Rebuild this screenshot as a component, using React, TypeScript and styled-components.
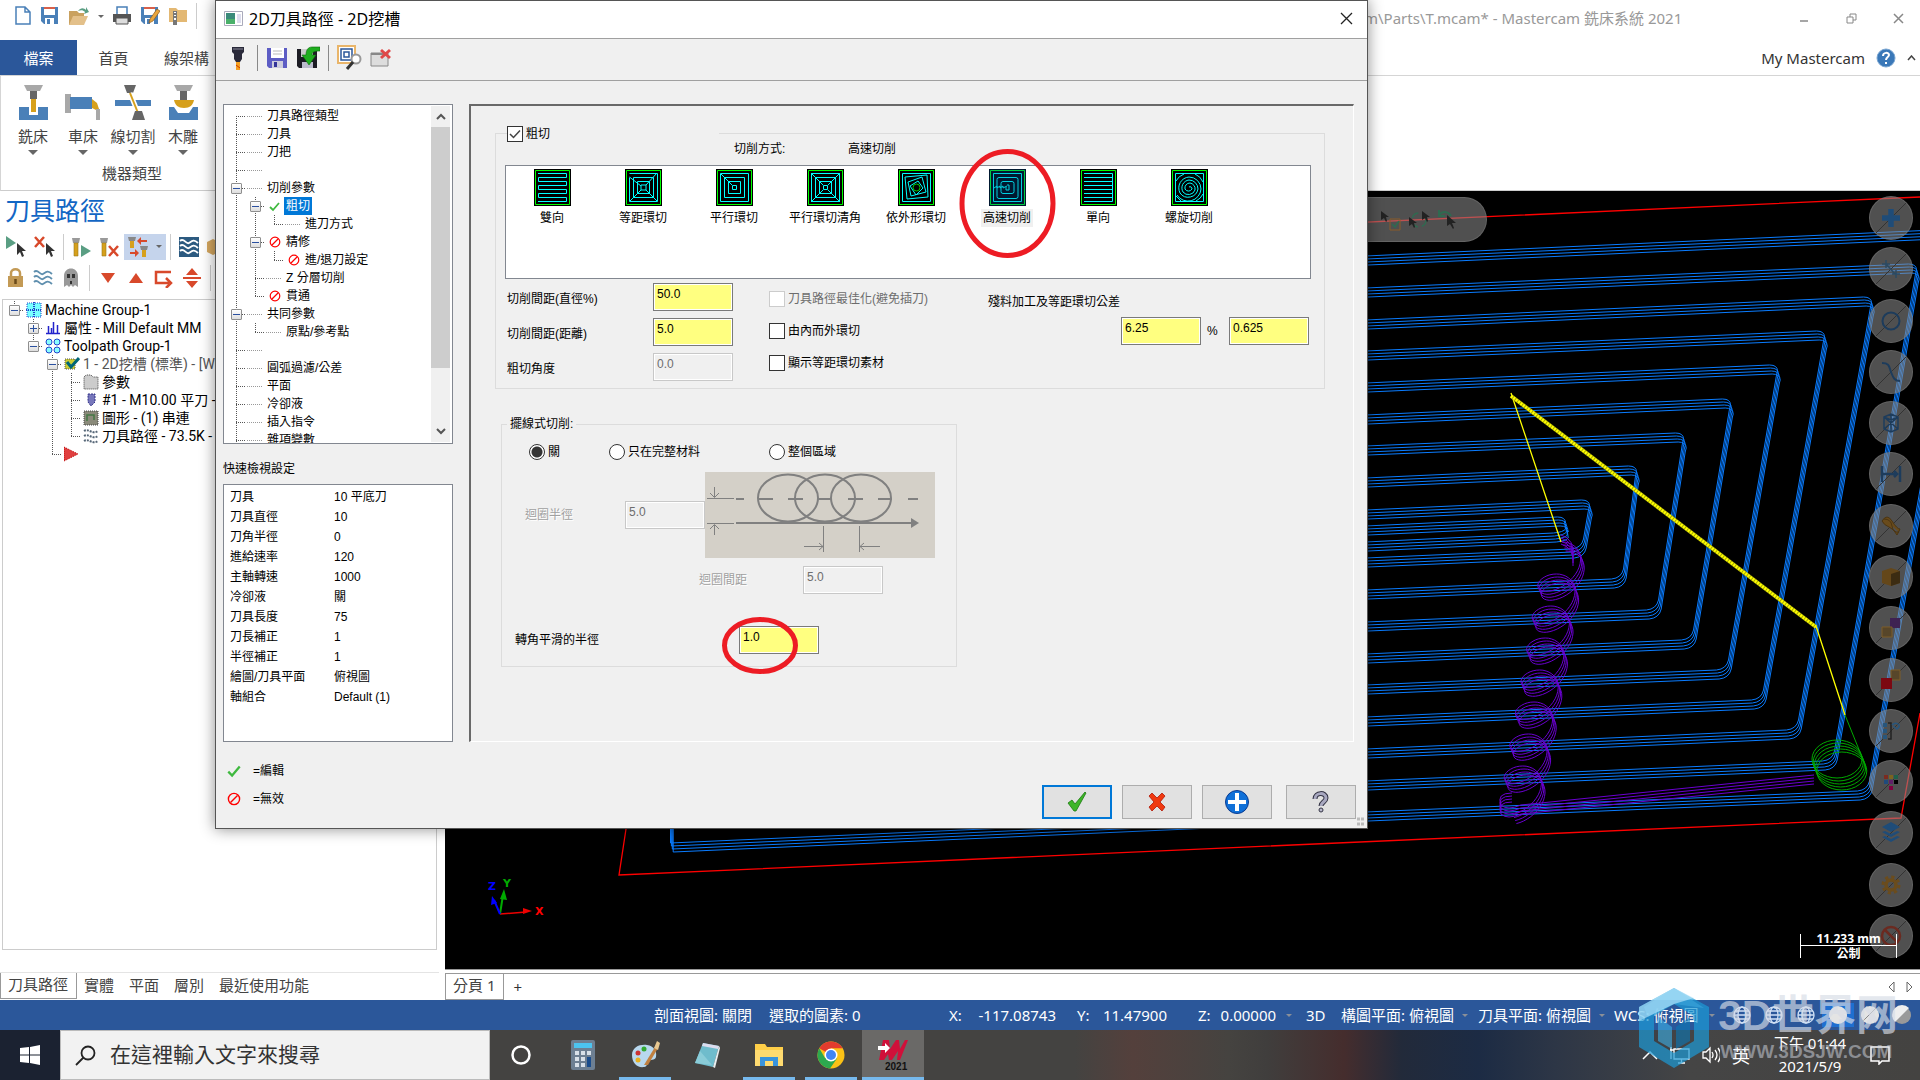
import React from "react";
import styled, { createGlobalStyle, css } from "styled-components";

const UI = `"Noto Sans", "Noto Sans CJK TC", sans-serif`;
const CLASSIC = `"Liberation Sans", "Noto Sans CJK TC", sans-serif`;

const Global = createGlobalStyle`
  * { box-sizing: border-box; }
  html, body { margin: 0; height: 100%; }
  body { font-family: ${UI}; font-size: 15px; color: #333; background: #fff; overflow: hidden; }
  button, input { font-family: inherit; font-size: inherit; color: inherit; margin: 0; }
  button { background: none; border: 0; padding: 0; }
  svg { display: block; flex: none; }
`;

/* ---------- shell ---------- */
const Shell = styled.div`
  min-height: 100vh;
  display: flex;
  flex-direction: column;
  position: relative;
`;
const Between = styled.div`
  display: flex;
  justify-content: space-between;
  align-items: center;
`;
const TitleBar = styled(Between)`
  height: 40px;
  padding: 0 16px 8px 14px;
`;
const QuickBar = styled.div`
  display: flex;
  align-items: center;
  gap: 8px;
`;
const IconButton = styled.button`
  display: flex;
  align-items: center;
  justify-content: center;
`;
const TitleText = styled.div`
  color: #999;
  width: 540px;
  display: flex;
  justify-content: space-between;
  align-items: center;
  line-height: 20px;
  padding-top: 4px;
`;
const WindowButtons = styled.div`
  display: flex;
  gap: 36px;
`;
const TabBar = styled(Between)`
  height: 36px;
  border-bottom: 1px solid #d5d5d5;
`;
const RibbonTabs = styled.div`
  display: flex;
  height: 35px;
`;
const RibbonTab = styled.button<{ $file?: boolean }>`
  width: ${(p) => (p.$file ? 77 : 73)}px;
  white-space: nowrap;
  line-height: 34px;
  color: ${(p) => (p.$file ? "#fff" : "#444")};
  background: ${(p) => (p.$file ? "#2b579a" : "transparent")};
`;
const Account = styled.div`
  display: flex;
  align-items: center;
  gap: 11px;
  padding-right: 4px;
`;
const Ribbon = styled.div`
  height: 115px;
  padding-left: 7px;
  border-left: 1px solid #d5d5d5;
  border-bottom: 1px solid #ccc;
`;
const MachineRow = styled.div`
  display: flex;
  padding-top: 8px;
`;
const MachineButton = styled.button`
  width: 50px;
  display: flex;
  flex-direction: column;
  align-items: center;
  gap: 1px;
  white-space: nowrap;
  line-height: 26px;
  color: #444;
`;
const RibbonCaption = styled.div`
  width: 248px;
  text-align: center;
  line-height: 36px;
  color: #444;
`;
const Workspace = styled.div`
  flex: 1;
  display: flex;
  min-height: 0;
`;
const Manager = styled.aside`
  width: 445px;
  display: flex;
  flex-direction: column;
`;
const ManagerTitle = styled.h2`
  margin: 0;
  padding: 0 5px 2px;
  font-weight: 400;
  font-size: 25px;
  line-height: 38px;
  color: #1266c4;
`;
const ToolRow = styled.div`
  display: flex;
  align-items: center;
  height: 31px;
  padding-left: 5px;
  gap: 8px;
`;
const Divider = styled.span<{ $c?: string; $h?: number }>`
  width: 1px;
  height: ${(p) => p.$h ?? 26}px;
  background: ${(p) => p.$c ?? "#ccc"};
`;
const ToggleTool = styled(IconButton)`
  width: 42px;
  height: 26px;
  gap: 8px;
  margin: 0 -4px;
  background: #c5d4ec;
`;
const OpsTree = styled.div`
  flex: 1;
  margin: 6px 8px 0 2px;
  padding: 1px 0 0 2px;
  border: 1px solid #ccc;
  font-family: Roboto, "Noto Sans CJK TC", sans-serif;
  font-size: 14px;
  color: #000;
  overflow: hidden;
`;
const PaneTabs = styled.div`
  height: 28px;
  margin-top: 22px;
  display: flex;
  border-top: 1px solid #e4e4e4;
  margin-right: 6px;
`;
const PaneTab = styled.button<{ $on?: boolean }>`
  padding: 0 8px 0 7px;
  height: 26px;
  line-height: 20px;
  padding-bottom: 3px;
  color: #444;
  border: solid #999;
  border-width: ${(p) => (p.$on ? "0 1px 1px 1px" : "0")};
`;
const ViewColumn = styled.main`
  flex: 1;
  min-width: 0;
  display: flex;
  flex-direction: column;
`;
const Viewport = styled.div`
  flex: 1;
  position: relative;
  overflow: hidden;
  background: #000;
`;
const Canvas = styled.svg`
  position: absolute;
  inset: 0;
`;
const SelectBar = styled.div`
  position: absolute;
  top: 6px;
  left: 700px;
  width: 342px;
  height: 45px;
  border-radius: 0 23px 23px 0;
  background: rgba(140, 140, 140, 0.57);
  border: 1px solid rgba(120, 120, 120, 0.5);
  display: flex;
  justify-content: flex-end;
  align-items: center;
  gap: 6px;
  padding-right: 28px;
`;
const MaskRail = styled.div`
  position: absolute;
  top: 5px;
  bottom: 11px;
  right: 7px;
  display: flex;
  flex-direction: column;
  justify-content: space-between;
`;
const MaskButton = styled.button`
  width: 44px;
  height: 44px;
  border-radius: 50%;
  background: rgba(140, 140, 140, 0.57);
  border: 1px solid rgba(120, 120, 120, 0.5);
  display: flex;
  align-items: center;
  justify-content: center;
`;
const ScaleBar = styled.div`
  position: absolute;
  right: 23px;
  bottom: 11px;
  width: 97px;
  height: 24px;
  border: solid #fff;
  border-width: 0 1px;
  color: #fff;
  font-weight: 700;
  font-size: 12px;
  line-height: 16px;
  text-align: center;
  font-family: "Noto Sans", "Noto Sans CJK TC", sans-serif;
`;
const ScaleTop = styled.div`
  height: 12px;
  line-height: 10px;
  border-bottom: 1px solid #fff;
`;
const SheetTabs = styled.div`
  height: 31px;
  border-top: 1px solid #999;
  padding-top: 3px;
`;
const SheetInner = styled(Between)`
  height: 26px;
  border-top: 1px solid #999;
  padding-right: 6px;
`;
const SheetGroup = styled.div`
  display: flex;
  gap: 9px;
`;

/* ---------- status + taskbar ---------- */
const StatusBar = styled.footer`
  height: 30px;
  background: #2b579a;
  color: #fff;
  display: flex;
  align-items: center;
  justify-content: flex-end;
  padding-right: 2px;
  line-height: 28px;
  white-space: nowrap;
`;
const StatusItem = styled.span<{ $w: number }>`
  width: ${(p) => p.$w}px;
  display: flex;
  align-items: center;
  justify-content: space-between;
`;
const ShadeButton = styled(IconButton)<{ $on?: boolean }>`
  width: 32px;
  height: 24px;
  background: ${(p) => (p.$on ? "#1f6fd0" : "transparent")};
`;
const Taskbar = styled.div`
  height: 50px;
  display: flex;
  color: #fff;
  background: linear-gradient(90deg, #444341 0 50%, #444341 56%, #54403c 59%, #454340 64%, #403e3d 66%, #452d2d 70%, #222a3a 73%, #1c2b44 77%, #2d3646 81%, #454545 88%, #444341);
`;
const StartButton = styled(IconButton)`
  width: 60px;
  background: #1b2231;
`;
const SearchBox = styled.label`
  width: 430px;
  display: flex;
  align-items: center;
  gap: 14px;
  padding-left: 14px;
  background: #f2f2f2;
  border: 1px solid #bbb;
`;
const SearchInput = styled.input`
  flex: 1;
  border: 0;
  outline: 0;
  background: transparent;
  font-size: 21px;
  height: 46px;
  padding: 0 0 2px;
  &::placeholder { color: #333; opacity: 1; }
`;
const TaskButton = styled(IconButton)<{ $run?: boolean; $on?: boolean }>`
  width: 62px;
  padding-top: 3px;
  border-bottom: 3px solid transparent;
  ${(p) => p.$run && css`background: linear-gradient(#76b9ed, #76b9ed) center bottom / 52px 3px no-repeat border-box;`}
  ${(p) => p.$on && css`background: #6a6967; border-bottom-color: #76b9ed;`}
`;
const Tray = styled.div`
  margin-left: auto;
  display: flex;
  align-items: center;
  gap: 12px;
  padding-right: 30px;
`;
const Ime = styled.span`
  font-size: 18px;
`;
const Clock = styled.div`
  text-align: center;
  line-height: 23px;
  width: 96px;
`;
const Watermark = styled.div`
  position: absolute;
  right: 22px;
  bottom: 11px;
  display: flex;
  gap: 8px;
  align-items: center;
  color: rgba(215, 220, 230, 0.66);
  pointer-events: none;
`;
const MarkName = styled.div`
  font: 700 42px/48px "Liberation Sans", "Noto Sans CJK SC", sans-serif;
  white-space: nowrap;
`;
const MarkUrl = styled.div`
  font: 700 19px/24px "Liberation Sans", sans-serif;
  padding-left: 2px;
  opacity: 0.75;
`;

/* ---------- tree ---------- */
const TreeLine = styled.div`
  height: 18px;
  display: flex;
  align-items: center;
  white-space: nowrap;
`;
type GuideKind = "none" | "bar" | "tee" | "elbow" | "first" | "node" | "nodeEnd";
const Guide = styled.span<{ $k: GuideKind }>`
  width: 19px;
  height: 18px;
  flex: none;
  padding-left: 9px;
  display: flex;
  background-repeat: no-repeat;
  ${(p) => {
    const v = "repeating-linear-gradient(#555 0 1px, transparent 1px 2px)";
    const h = "repeating-linear-gradient(90deg, #555 0 1px, transparent 1px 2px)";
    const full = `${v} 9px 0 / 1px 18px no-repeat`;
    const half = `${v} 9px 0 / 1px 9px no-repeat`;
    const low = `${v} 9px 9px / 1px 9px no-repeat`;
    const arm = `${h} 9px 9px / 10px 1px no-repeat`;
    if (p.$k === "bar") return `background: ${full};`;
    if (p.$k === "tee" || p.$k === "node") return `background: ${full}, ${arm};`;
    if (p.$k === "elbow" || p.$k === "nodeEnd") return `background: ${half}, ${arm};`;
    if (p.$k === "first") return `background: ${low}, ${arm};`;
    return "";
  }}
`;
const Expander = styled.button`
  width: 11px;
  height: 11px;
  margin: 4px 0 0 -5px;
  flex: none;
  border: 1px solid #8f8f8f;
  border-radius: 1px;
  background: linear-gradient(#fff, #ddd);
  display: flex;
  align-items: center;
  justify-content: center;
`;
const Slot = styled.span<{ $dots?: boolean }>`
  width: 19px;
  height: 18px;
  flex: none;
  display: flex;
  align-items: center;
  justify-content: center;
  ${(p) => p.$dots && css`background: repeating-linear-gradient(90deg, #999 0 1px, transparent 1px 2px) 1px 9px / 16px 1px no-repeat;`}
`;
const NodeText = styled.span<{ $on?: boolean; $soft?: boolean }>`
  padding: 0 2px;
  line-height: 18px;
  color: ${(p) => (p.$on ? "#fff" : p.$soft ? "#555" : "#000")};
  background: ${(p) => (p.$on ? "#0078d7" : "transparent")};
`;

/* ---------- dialog ---------- */
const Dialog = styled.section`
  position: absolute;
  left: 215px;
  top: 0;
  width: 1153px;
  height: 829px;
  background: #f0f0f0;
  border: 1px solid #555;
  box-shadow: 0 0 14px rgba(0, 0, 0, 0.45);
  font-family: ${CLASSIC};
  font-size: 12px;
  color: #000;
  display: flex;
  flex-direction: column;
`;
const DialogTitle = styled(Between)`
  height: 37px;
  padding: 0 14px 2px 8px;
  background: #fff;
  font-family: ${UI};
  font-size: 16px;
  line-height: 34px;
`;
const DialogName = styled.div`
  display: flex;
  align-items: center;
  gap: 6px;
`;
const DialogTools = styled.div`
  height: 43px;
  border-top: 1px solid #a0a0a0;
  border-bottom: 1px solid #a0a0a0;
  display: flex;
  align-items: center;
  padding: 0 0 4px 11px;
  gap: 8px;
`;
const DialogBody = styled.div`
  display: flex;
  gap: 16px;
  padding: 23px 13px 0 7px;
`;
const SideColumn = styled.div`
  width: 230px;
`;
const TreeBox = styled.div`
  height: 340px;
  border: 1px solid #828790;
  background: #fff;
  display: flex;
  justify-content: space-between;
  overflow: hidden;
`;
const TreeRows = styled.div`
  padding: 2px 0 0 3px;
`;
const ScrollTrack = styled.div`
  width: 19px;
  margin: 1px 2px 1px 0;
  background: #f0f0f0;
  display: flex;
  flex-direction: column;
  justify-content: space-between;
`;
const ScrollButton = styled(IconButton)`
  height: 21px;
  width: 19px;
`;
const ScrollThumb = styled.div`
  height: 241px;
  margin-bottom: 53px;
  background: #cdcdcd;
`;
const SideLabel = styled.div`
  height: 40px;
  padding-top: 15px;
  line-height: 20px;
`;
const InfoBox = styled.div`
  height: 258px;
  padding: 2px 6px;
  border: 1px solid #828790;
  background: #fff;
`;
const InfoTable = styled.table`
  border-collapse: collapse;
  td, th { padding: 0; height: 20px; line-height: 20px; font-weight: 400; text-align: left; }
  th { width: 104px; }
`;
const Pane = styled.div`
  flex: 1;
  height: 638px;
  padding: 27px 28px 0 24px;
  border: solid;
  border-width: 2px 1px 1px 2px;
  border-color: #696969 #fff #fff #696969;
`;
const Group = styled.fieldset<{ $narrow?: boolean }>`
  margin: 0;
  min-width: 0;
  padding: 0;
  border: 1px solid #dcdcdc;
  height: ${(p) => (p.$narrow ? 251 : 256)}px;
  ${(p) => p.$narrow && css`width: 456px; margin: 27px 0 0 6px;`}
`;
const RoughHead = styled.div`
  display: flex;
  height: 34px;
  margin-top: -8px;
`;
const RoughToggle = styled.div`
  width: 212px;
  height: 16px;
  margin-left: 11px;
  background: #f0f0f0;
`;
const MethodName = styled.div`
  display: flex;
  gap: 48px;
  margin-left: 15px;
  padding-top: 14px;
  line-height: 18px;
`;
const MethodList = styled.div`
  height: 114px;
  margin: 5px 13px 4px 9px;
  border: 1px solid #828790;
  background: #fff;
  display: flex;
`;
const Method = styled.button<{ $on?: boolean }>`
  width: 91px;
  height: 60px;
  padding: 3px 0 0 1px;
  display: flex;
  flex-direction: column;
  align-items: center;
  gap: 3px;
  white-space: nowrap;
  span { line-height: 18px; padding: 0 2px; background: ${(p) => (p.$on ? "#f0f0f0" : "transparent")}; }
`;
const Settings = styled.div`
  display: flex;
  padding-left: 11px;
`;
const FieldStack = styled.div`
  display: grid;
  grid-template-columns: 146px 80px;
  align-items: center;
  row-gap: 7px;
`;
const TextField = styled.input`
  width: 80px;
  height: 28px;
  padding: 0 2px 6px 3px;
  border: 1px solid #7a7a7a;
  outline: 0;
  background: #ffff80;
  box-shadow: inset 0 0 0 1px #fff;
  font-size: 12px;
  border-radius: 0;
  &:disabled { background: #f0f0f0; border-color: #c8c8c8; color: #6d6d6d; }
`;
const CheckStack = styled.div`
  width: 219px;
  margin-left: 36px;
  padding-top: 8px;
  display: flex;
  flex-direction: column;
  gap: 16px;
`;
const Choice = styled.label<{ $off?: boolean }>`
  display: inline-flex;
  align-items: center;
  gap: 3px;
  height: 16px;
  line-height: 16px;
  white-space: nowrap;
  color: ${(p) => (p.$off ? "#6d6d6d" : "#000")};
`;
const Tick = styled.input`
  appearance: none;
  width: 16px;
  height: 16px;
  border: 1px solid #333;
  background: #fff;
  &[type="radio"] { border-radius: 50%; }
  &[type="radio"]:checked { background: radial-gradient(#333 0 5px, #fff 6px); }
  &[type="checkbox"]:checked {
    background: #fff url('data:image/svg+xml;utf8,<svg xmlns="http://www.w3.org/2000/svg" viewBox="0 0 14 14"><path d="M2 7l3.500 3.500L12 3.500" fill="none" stroke="%23444" stroke-width="1.500"/></svg>');
  }
  &:disabled { border-color: #ccc; }
`;
const Tolerance = styled.div`
  padding-top: 10px;
  line-height: 18px;
`;
const ToleranceRow = styled.div`
  display: flex;
  align-items: center;
  gap: 6px;
  padding: 6px 0 0 133px;
  label { width: 16px; }
`;
const Legend = styled.legend`
  margin-left: 5px;
  padding: 0 3px;
  line-height: 16px;
  height: 16px;
`;
const RadioRow = styled.div`
  display: grid;
  grid-template-columns: 80px 160px 100px;
  padding: 12px 0 12px 27px;
`;
const LoopRow = styled.div`
  display: flex;
  align-items: center;
  padding-left: 23px;
`;
const Caption = styled.label<{ $w: number; $off?: boolean }>`
  width: ${(p) => p.$w}px;
  line-height: 18px;
  ${(p) => p.$off && css`color: #a0a0a0; text-shadow: 1px 1px #fff;`}
`;
const SpacingRow = styled.div`
  display: flex;
  align-items: center;
  padding: 8px 0 0 197px;
`;
const CornerRow = styled.div`
  display: flex;
  align-items: center;
  padding: 32px 0 0 13px;
`;
const DialogFoot = styled.div`
  display: flex;
  justify-content: space-between;
  padding: 14px 11px 0 11px;
`;
const LegendKey = styled.div`
  display: flex;
  flex-direction: column;
  gap: 10px;
  padding-top: 6px;
`;
const KeyRow = styled.div`
  display: flex;
  align-items: center;
  gap: 12px;
  line-height: 18px;
`;
const Actions = styled.div`
  display: flex;
  gap: 10px;
  padding-top: 29px;
`;
const Action = styled(IconButton)<{ $main?: boolean; $last?: boolean }>`
  width: 70px;
  height: 34px;
  background: #e1e1e1;
  border: ${(p) => (p.$main ? "2px solid #0078d7" : "1px solid #adadad")};
  margin-left: ${(p) => (p.$last ? 4 : 0)}px;
`;
const Ring = styled.svg`
  position: absolute;
  left: 0;
  top: 0;
  pointer-events: none;
`;

/* ---------- drawings ---------- */
const S: React.FC<{ w: number; h?: number; v?: string; children: React.ReactNode }> = ({ w, h, v, children }) => (
  <svg width={w} height={h ?? w} viewBox={v ?? `0 0 ${w} ${h ?? w}`} fill="none" aria-hidden="true">{children}</svg>
);
const Down = ({ c = "#666", w = 10 }: { c?: string; w?: number }) => (
  <S w={w} h={w / 2} v="0 0 10 5"><path d="M0 0h10L5 5z" fill={c} /></S>
);
const Disk = ({ c = "#4a80b8", pen = false }: { c?: string; pen?: boolean }) => (
  <S w={20}>
    <path d="M1 1h17v17H4l-3-3z" fill={c} /><path d="M4 1h11v8H4z" fill="#fff" /><path d="M4 1h11v2H4z" fill="#d8604a" />
    <path d="M5 12h9v6H5z" fill="#fff" /><path d="M7 13h3v5H7z" fill={c} />
    {pen && <path d="M9 17l1-4L17 3l3 2-7 10z" fill="#e9a53c" stroke="#8a5a20" strokeWidth=".7" />}
  </S>
);
const NewFile = () => <S w={18} h={20}><path d="M2 1h9l5 5v12H2zM11 1v5h5" stroke="#4a80b8" strokeWidth="1.500" /></S>;
const OpenFile = () => (
  <S w={22} h={20}><path d="M1 5h8l2 2h5v12H1z" fill="#c9a15f" /><path d="M5 10h15l-4 9H1z" fill="#e3c08a" /><path d="M10 5c3-4 6-3 8-1V1l3 5-5 2 1-2c-2-2-4-2-7-1z" fill="#5a9e83" /></S>
);
const Printer = () => (
  <S w={20}><path d="M5 1h10v8H5z" fill="#fff" stroke="#4a80b8" strokeWidth="1.500" /><path d="M1 8h18v8H1z" fill="#555" /><path d="M4 12h12v6H4z" fill="#ddd" stroke="#555" /></S>
);
const ZipFolder = () => (
  <S w={20}><path d="M1 2h7l2 2h9v12H1z" fill="#e3b873" /><path d="M5 5h4v14H5z" fill="#777" /><path d="M6 6h2v1H6zM6 9h2v1H6zM6 12h2v2H6z" fill="#fff" /></S>
);
const MachineIcon = ({ kind }: { kind: number }) => (
  <S w={36} h={38}>
    {kind === 0 && <><path d="M9 1h19l-3 6H12z" fill="#a8a8a8" /><path d="M15 7h7v8h-7z" fill="#666" /><path d="M4 23h10v8h9v-8h10v13H4z" fill="#4a80b8" /><path d="M16 15h5v13h-5z" fill="#d6a01c" /></>}
    {kind === 1 && <><path d="M0 10h6v19H0z" fill="#a8a8a8" /><path d="M5 13h22v12H5z" fill="#4a80b8" /><path d="M27 15l5 4 3 9-8-4z" fill="#d6a01c" /><path d="M31 25h4v11h-4z" fill="#a8a8a8" /></>}
    {kind === 2 && <><path d="M9 1h12l-3 8h-6z" fill="#666" /><path d="M0 16h36v6H0z" fill="#4a80b8" /><path d="M15 9l8 20" stroke="#fff" strokeWidth="5" /><path d="M15 9l8 20" stroke="#d6a01c" strokeWidth="2" /><path d="M20 27h7l3 9H17z" fill="#666" /></>}
    {kind === 3 && <><path d="M9 1h19l-3 6H12z" fill="#a8a8a8" /><path d="M15 7h7v9h-7z" fill="#666" /><path d="M4 23h5l4 6h11l4-6h5v13H4z" fill="#4a80b8" /><path d="M9 16h20c-1 5-4 8-10 8s-9-3-10-8z" fill="#d6a01c" /></>}
  </S>
);
const Cursor = ({ x = 10, y = 7, c = "#333" }) => <path d={`M${x} ${y}l0 12 3-3 2 5 2-1-2-5h4z`} fill={c} />;
const ToolBit = ({ x = 2 }) => <><path d={`M${x} 1h8l-1 5h-6z`} fill="#999" /><path d={`M${x + 2} 6h4v13h-4z`} fill="#d6a01c" stroke="#9a7a1c" strokeWidth=".6" /></>;
const Waves = ({ fill, c }: { fill?: string; c: string }) => (
  <S w={20}>{fill && <path d="M0 0h20v20H0z" fill={fill} />}{[4, 9, 14].map((y) => <path key={y} d={`M1 ${y}c4-4 6 4 9 2s5-4 9 0`} stroke={c} strokeWidth="1.800" />)}</S>
);
const Check = ({ c = "#3fb93f", w = 11 }) => <S w={w} v="0 0 11 11"><path d="M1 6l3 3 6-7" stroke={c} strokeWidth="1.800" /></S>;
const No = ({ w = 12 }) => <S w={w} v="0 0 12 12"><circle cx="6" cy="6" r="4.800" stroke="#f00" strokeWidth="1.200" /><path d="M3 9l6-6" stroke="#f00" strokeWidth="1.200" /></S>;

const patterns: React.ReactNode[] = [
  <path d="M4 4.500H32.500V8.500H4.500V12.500H32.500V16.500H4.500V20.500H32.500V24.500H4.500V28.500H32.500V32.500H4" />,
  <path d="M4.500 4.500H32.500V32.500H4.500V8.500M8.500 8.500h20v20h-20zM12.500 12.500h12v12h-12zM16 16h5v5h-5zM4.500 8L16 17M32 4L21 16M32 32L21 21M5 32L16 21" />,
  <path d="M4.500 4.500h28v28h-28zM8.500 8.500h20v20h-20zM12.500 12.500h12v12h-12zM16.500 16.500h4v4h-4zM5 5l11 11" />,
  <path d="M4.500 4.500h28v28h-28zM8.500 8.500h20v20h-20zM12.500 12.500h12v12h-12zM16.500 16.500h4v4h-4zM4 4l12 12M33 4L21 16M33 33L21 21M4 33l12-12" />,
  <><path d="M4.500 4.500h28v28h-28zM7 8l22-2 1 22-21 2zM10 13l14-5 4 15-15 4zM12 17l8-5 5 7-7 7z" /><circle cx="18.500" cy="18.500" r="3.500" stroke="#0c0" /></>,
  <path d="M4.500 4.500h28v28h-28zM10 8.500h17q2 0 2 2v17q0 2-2 2h-17q-2 0-2-2v-17q0-2 2-2zM14 12.500h9q2 0 2 2v8q0 2-2 2h-9q-2 0-2-2v-8q0-2 2-2zM5 19l3-2v2l3-2v2l3-2v2l4-2M18 16h2v5h-3v-3" />,
  <path d="M4 4.500H32.500V32.500H4M4 8.500H32M4 12.500H32M4 16.500H32M4 20.500H32M4 24.500H32M4 28.500H32" />,
  <><path d="M4.500 4.500h28v28h-28z" /><path d="M18 18a2 2 0 0 1 3 2a4 4 0 0 1-7 0a5 5 0 0 1 5-6a6 6 0 0 1 5 7a7 7 0 0 1-12 2a8 8 0 0 1 6-12a9 9 0 0 1 9 9a10 10 0 0 1-18 4a11 11 0 0 1 9-16a12 12 0 0 1 12 12a13 13 0 0 1-24 6M5 12a15 15 0 0 1 8-7M24 5a15 15 0 0 1 8 8M32 25a15 15 0 0 1-7 7M10 32l-5-5" /></>,
];
const PatternIcon = ({ i, on }: { i: number; on?: boolean }) => (
  <S w={37}>
    <path d="M0 0h37v37H0z" fill={on ? "#001830" : "#000"} />
    <path d="M1.500 1.500h34v34h-34z" stroke={on ? "#00d040" : "#0f0"} />
    <g stroke={on ? "#00d0e0" : "#0ff"}>{patterns[i]}</g>
  </S>
);

/* pocket rings: [left y at x=1367, top corner x/y, bottom corner x/y, left y of the bottom run] */
const rings = [
  [261, 1966, 234, 1869, 796, 817], [293, 1918, 269, 1834, 766, 786], [325, 1873, 302, 1798, 735, 754],
  [356, 1826, 336, 1763, 705, 722], [388, 1779, 370, 1728, 675, 690], [420, 1732, 404, 1693, 645, 659],
  [451, 1685, 438, 1658, 615, 627], [483, 1638, 471, 1623, 584, 595], [515, 1591, 505, 1583, 554, 563],
  [531, 1567, 522, 1565, 538, 547],
];
const steps = [-5, -2, 1, 4];
const ringPath = (r: number[], i: number) => {
  const [ly, tx, ty, bx, by, lb] = r;
  const start = i === 0 ? "L672 848V700" : `L1300 ${lb + 3}`;
  const big = i < 9 ? 10 : 4;
  return `M1300 ${ly + 3}L1367 ${ly}L${tx - 8} ${ty}Q${tx} ${ty} ${tx} ${ty + 6}L${tx - 1} ${ty + big}L${bx + 2} ${by - big}Q${bx} ${by - 1} ${bx - 10} ${by}L1367 ${lb}${start}`;
};
const coil = (() => {
  let d = "";
  for (let k = 0; k <= 272; k++) {
    const t = k / 36;
    const a = t * Math.PI * 2 - Math.PI / 2;
    const x = 1564 - t * 5.6 + 20 * Math.cos(a);
    const y = 562 + t * 32 + 15 * Math.sin(a) - 5 * Math.cos(a);
    d += `${k ? "L" : "M"}${x.toFixed(1)} ${y.toFixed(1)}`;
  }
  return d;
})();

const Scene = () => (
  <Canvas width="1475" height="778" viewBox="445 191 1475 778" fill="none">
    <path d="M445 264L1920 197M1920 713L1901 818L1360 842L619 875L626 829" stroke="#f00" strokeWidth="1.300" />
    <g stroke="#0a7cff" strokeWidth="1">
      {rings.map((r, i) => steps.map((s) => <path key={`${i}${s}`} d={ringPath(r, i)} transform={`translate(${s * 0.3} ${s})`} />))}
    </g>
    <g stroke="#6a00d0" strokeWidth="1">
      {steps.map((s) => <path key={s} d={coil} transform={`translate(${s * 0.4} ${s})`} />)}
      {steps.map((s) => <path key={`t${s}`} d={`M1561 ${540 + s}q14 4 12 22`} />)}
      {[-5, -2, 1, 4].map((s) => <path key={s} d={`M1512 ${798 + s}q-16 0-11 12q6 6 20 0L1814 ${780 + s}`} />)}
    </g>
    <path d="M1511 393L1561 542M1816 626L1845 715" stroke="#ff0" strokeWidth="1.300" />
    <path d="M1511 396L1816 627" stroke="#a8a800" strokeWidth="4" />
    <path d="M1511 396L1816 627" stroke="#ff0" strokeWidth="3" strokeDasharray="2 1" />
    <g stroke="#0a0">
      <path d="M1845 715L1864 762" />
      {[-5, -2, 1, 4, 7].map((s) => <ellipse key={s} cx={1839 + s * 0.4} cy={764 + s} rx="25" ry="19" />)}
    </g>
    <path d="M500 914L526 912" stroke="#e00" strokeWidth="1.500" /><path d="M532 911l-9-3v6z" fill="#e00" />
    <path d="M500 914L503 895" stroke="#0a0" strokeWidth="2" /><path d="M504 889l-4 10 7 1z" fill="#0a0" />
    <path d="M500 914L494 900" stroke="#00f" strokeWidth="2" /><path d="M492 896l-1 9 6-2z" fill="#00f" />
    <g fontFamily="DejaVu Sans, sans-serif" fontWeight="700" fontSize="11">
      <text x="535" y="915" fill="#f00">X</text><text x="503" y="887" fill="#0a0">Y</text><text x="488" y="890" fill="#00f">Z</text>
    </g>
  </Canvas>
);

const maskArt: React.ReactNode[] = [
  <path d="M12 3v18M3 12h18" stroke="#1f4c78" strokeWidth="5.500" />,
  <path d="M3 7h8M7 3v8M13 17h8M17 13v8M8 8l8 9" stroke="#2b4a62" strokeWidth="1.500" />,
  <circle cx="12" cy="12" r="8.500" stroke="#1d3c5c" strokeWidth="2" />,
  <path d="M3 3c8 0 7 4 9 9s3 9 9 9" stroke="#1d3c5c" strokeWidth="2" />,
  <path d="M5 6l7-3 7 3v12l-7 3-7-3zM5 6l14 12M5 18L19 6M12 3v18M5 6l7 3 7-3" stroke="#1d3c5c" strokeWidth="1.500" />,
  <path d="M3 4v16M21 4v16M4 12h14M15 9l3 3-3 3" stroke="#1d3c5c" strokeWidth="2.500" />,
  <path d="M3 7q5-8 10 0t8 8l-3 6q-3-6-8-8t-7-6zM5 5q7 0 8 7t7 6" fill="#694b1c" stroke="#4b3512" />,
  <><path d="M3 6l9-3 9 3v12l-9 3-9-3z" fill="#64471a" /><path d="M12 9l9-3v12l-9 3z" fill="#3c2c12" /></>,
  <><path d="M11 2h10v10H11z" fill="#3e2252" /><path d="M3 11h10v10H3z" fill="#57462a" stroke="#7c5d28" /></>,
  <><path d="M12 2h9v10h-9z" fill="#57462a" stroke="#7c5d28" /><path d="M2 10h11v11H2z" fill="#7c0812" /></>,
  <><path d="M4 4h4v4H4zM4 10h4v4H4zM4 16h4v4H4z" fill="#28567c" /><path d="M9 4h3v16H9" stroke="#222" strokeWidth="1.500" /><path d="M13 6q3-3 6-1t-1 5l-4-3" stroke="#28567c" strokeWidth="1.500" /></>,
  <><path d="M5 5h4v4H5z" fill="#7c2b20" /><path d="M10 5h4v4h-4z" fill="#7c6420" /><path d="M15 5h4v4h-4z" fill="#20604a" /><path d="M5 10h4v4H5z" fill="#204a7c" /><path d="M10 10h4v4h-4z" fill="#602068" /><path d="M15 10h4v4h-4z" fill="#000" /><path d="M10 16h4v4h-4z" fill="#800040" /></>,
  <path d="M12 1l9 5-9 5-9-5zM3 11l3-1 6 3 6-3 3 1-9 5zM3 16l3-1 6 3 6-3 3 1-9 5z" fill="#1f4c78" />,
  <><circle cx="12" cy="12" r="5" stroke="#6b4c1c" strokeWidth="3.500" /><circle cx="12" cy="12" r="8" stroke="#6b4c1c" strokeWidth="3" strokeDasharray="3.200 3.083" /></>,
  <><circle cx="12" cy="12" r="9" stroke="#6b2a20" strokeWidth="2.500" /><path d="M6 6l12 12" stroke="#6b2a20" strokeWidth="2.500" /></>,
];

/* ---------- data ---------- */
type Node = { g: GuideKind[]; icon?: React.ReactNode; text?: string; plus?: boolean; on?: boolean; soft?: boolean; dots?: boolean };
const NodeRow = ({ n }: { n: Node }) => (
  <TreeLine>
    {n.g.map((k, i) => (
      <Guide key={i} $k={k}>
        {(k === "node" || k === "nodeEnd") && (
          <Expander aria-label="toggle">
            <S w={7}><path d={n.plus ? "M0 3.500h7M3.500 0v7" : "M0 3.500h7"} stroke="#2a50a0" /></S>
          </Expander>
        )}
      </Guide>
    ))}
    <Slot $dots={n.dots}>{n.icon}</Slot>
    {n.text && <NodeText $on={n.on} $soft={n.soft}>{n.text}</NodeText>}
  </TreeLine>
);
const pageTree: Node[] = [
  { g: ["first"], dots: true, text: "刀具路徑類型" },
  { g: ["tee"], dots: true, text: "刀具" },
  { g: ["tee"], dots: true, text: "刀把" },
  { g: ["tee"], dots: true },
  { g: ["node"], dots: true, text: "切削參數" },
  { g: ["bar", "node"], icon: <Check />, text: "粗切", on: true },
  { g: ["bar", "bar", "elbow"], dots: true, text: "進刀方式" },
  { g: ["bar", "node"], icon: <No />, text: "精修" },
  { g: ["bar", "bar", "elbow"], icon: <No />, text: "進/退刀設定" },
  { g: ["bar", "tee"], dots: true, text: "Z 分層切削" },
  { g: ["bar", "elbow"], icon: <No />, text: "貫通" },
  { g: ["node"], dots: true, text: "共同參數" },
  { g: ["bar", "elbow"], dots: true, text: "原點/參考點" },
  { g: ["tee"], dots: true },
  { g: ["tee"], dots: true, text: "圓弧過濾/公差" },
  { g: ["tee"], dots: true, text: "平面" },
  { g: ["tee"], dots: true, text: "冷卻液" },
  { g: ["tee"], dots: true, text: "插入指令" },
  { g: ["tee"], dots: true, text: "雜項變數" },
];
const opsTree: Node[] = [
  { g: ["nodeEnd"], icon: <S w={16}><path d="M1 1h14v14H1z" fill="#7ff" stroke="#24c" strokeDasharray="1 1" /><path d="M8 0v16M0 8h16" stroke="#24c" strokeWidth="2" strokeDasharray="1 1" /></S>, text: "Machine Group-1" },
  { g: ["none", "node"], plus: true, icon: <S w={16}><path d="M1 13.500h14M3.500 6v7M6.500 8v5M8.500 2v11M12.500 5v8" stroke="#22c" strokeWidth="1.500" /></S>, text: "屬性 - Mill Default MM" },
  { g: ["none", "nodeEnd"], icon: <S w={16}>{[[4, 4], [12, 4], [4, 12], [12, 12]].map(([x, y]) => <circle key={`${x}-${y}`} cx={x} cy={y} r="3" fill="#8ff" stroke="#24c" />)}</S>, text: "Toolpath Group-1" },
  { g: ["none", "none", "node"], icon: <S w={16}><path d="M1 3h10v10H1z" fill="#cc3" stroke="#555" strokeDasharray="1 1" /><path d="M3 6l4 5 8-9" stroke="#067" strokeWidth="3" /></S>, text: "1 - 2D挖槽 (標準) - [WCS: 俯視圖]", soft: true },
  { g: ["none", "none", "bar", "tee"], icon: <S w={16}><path d="M1 3l2-2h5l2 2h5v12H1z" fill="#ccc" stroke="#444" strokeDasharray="1 1" /></S>, text: "參數" },
  { g: ["none", "none", "bar", "tee"], icon: <S w={16}><path d="M5 2h7v8l-4 4-3-4z" fill="#77b" stroke="#338" strokeDasharray="2 1" /></S>, text: "#1 - M10.00 平刀 - 平刀" },
  { g: ["none", "none", "bar", "tee"], icon: <S w={16}><path d="M1 1h14v14H1z" fill="#8a8a7a" stroke="#444" strokeDasharray="1 1" /><path d="M4 11V5h7v5" stroke="#474" strokeWidth="1.500" /></S>, text: "圖形 - (1) 串連" },
  { g: ["none", "none", "bar", "elbow"], icon: <S w={16}><path d="M1 3c5-3 8 4 14 0M1 8c5-3 8 4 14 0M1 13c5-3 8 4 14 0" stroke="#567" strokeWidth="2" strokeDasharray="2 1" /></S>, text: "刀具路徑 - 73.5K - T.NC" },
  { g: ["none", "none", "elbow"], icon: <S w={16}><path d="M0 1v14l14-7z" fill="#e04040" stroke="#b00" strokeDasharray="1 1" /></S> },
];
const info = [["刀具", "10 平底刀"], ["刀具直徑", "10"], ["刀角半徑", "0"], ["進給速率", "120"], ["主軸轉速", "1000"], ["冷卻液", "關"], ["刀具長度", "75"], ["刀長補正", "1"], ["半徑補正", "1"], ["繪圖/刀具平面", "俯視圖"], ["軸組合", "Default (1)"]];
const methods = ["雙向", "等距環切", "平行環切", "平行環切清角", "依外形環切", "高速切削", "單向", "螺旋切削"];

const LoopDiagram = () => (
  <S w={230} h={86}>
    <path d="M0 0h230v86H0z" fill="#d4d0c8" />
    <g stroke="#808080" strokeWidth="2">
      {[83, 120, 156].map((x) => <ellipse key={x} cx={x} cy="26" rx="30" ry="23.500" />)}
      <path d="M31 27h8M54 27h14M83 27h15M113 27h14M143 27h15M173 27h14M203 27h10M31 51h176" />
    </g>
    <path d="M206 46l8 5-8 5z" fill="#808080" />
    <path d="M2 26.500h27M2 51.500h27M9.500 15v10M5 21l4.500 4.500L14 21M9.500 63v-10M5 57l4.500-4.500L14 57M118.500 54v26M154.500 54v26M99 74.500h19M114 71l4 3.500-4 3.500M175 74.500h-20M159 71l-4 3.500 4 3.500" stroke="#808080" />
  </S>
);

const PocketDialog = () => (
  <Dialog role="dialog" aria-label="2D刀具路徑 - 2D挖槽">
    <DialogTitle>
      <DialogName>
        <S w={19} h={15}><path d="M.5.500h18v14H.5z" fill="#fff" stroke="#aab" /><path d="M2 2h9v11H2z" fill="#3a8a7a" /><path d="M2 8h9v5H2z" fill="#4ab06a" /><path d="M13 3h4v9h-4z" fill="#dde" /></S>
        2D刀具路徑 - 2D挖槽
      </DialogName>
      <IconButton aria-label="關閉視窗"><S w={13}><path d="M1 1l11 11M12 1L1 12" stroke="#222" strokeWidth="1.300" /></S></IconButton>
    </DialogTitle>
    <DialogTools>
      <IconButton aria-label="刀具"><S w={22} h={24}><path d="M5 1h12v5l-2 2v5l-2 3H9l-2-3V8L5 6z" fill="#2a2a3a" /><path d="M6 3h10" stroke="#889" /><path d="M9 16h4v8H9z" fill="#f5a020" /><path d="M9 19l4 3" stroke="#c30" /></S></IconButton>
      <Divider $c="#888" />
      <IconButton aria-label="儲存"><S w={22}><path d="M1 1h20v20H3l-2-2z" fill="#5c5cc4" /><path d="M5 1h13v10H5z" fill="#fff" /><path d="M7 4h9M7 7h9" stroke="#bbb" /><path d="M6 14h11v7H6z" fill="#ccd" /><path d="M8 15h3v5H8z" fill="#339" /></S></IconButton>
      <IconButton aria-label="載入"><S w={24}><path d="M1 3h20v19H3l-2-2z" fill="#1c1c24" /><path d="M5 3h12v8H5z" fill="#ccc" /><path d="M6 16h11v6H6z" fill="#bbc" /><path d="M24 1h-8c-4 0-6 3-6 8H6l7 10 7-10h-4c0-3 2-4 8-4z" fill="#1fae1f" stroke="#0a6a0a" strokeWidth=".6" /></S></IconButton>
      <Divider $c="#888" />
      <IconButton aria-label="預覽"><S w={25}><path d="M1 1h17v17H1z" fill="#fff" stroke="#e9b56a" strokeWidth="2" /><path d="M4 4h11v11H4zM7 7h5v5H7z" stroke="#2b579a" strokeWidth="1.500" /><circle cx="19" cy="14" r="4.500" stroke="#999" strokeWidth="2" fill="#fff" /><path d="M16 17l-6 7" stroke="#333" strokeWidth="3" /></S></IconButton>
      <IconButton aria-label="關閉預覽"><S w={21} h={20}><path d="M1 5h17v13H1z" fill="#ddd" stroke="#888" /><path d="M1 6h17" stroke="#888" strokeWidth="2" /><path d="M11 2l9 8M20 2l-9 8" stroke="#e04848" strokeWidth="3" /></S></IconButton>
    </DialogTools>
    <DialogBody>
      <SideColumn>
        <TreeBox>
          <TreeRows>{pageTree.map((n, i) => <NodeRow key={i} n={n} />)}</TreeRows>
          <ScrollTrack>
            <ScrollButton aria-label="向上捲動"><S w={10} h={7}><path d="M1 6l4-4 4 4" stroke="#555" strokeWidth="2" /></S></ScrollButton>
            <ScrollThumb />
            <ScrollButton aria-label="向下捲動"><S w={10} h={7}><path d="M1 1l4 4 4-4" stroke="#555" strokeWidth="2" /></S></ScrollButton>
          </ScrollTrack>
        </TreeBox>
        <SideLabel>快速檢視設定</SideLabel>
        <InfoBox>
          <InfoTable><tbody>{info.map(([k, v]) => <tr key={k}><th scope="row">{k}</th><td>{v}</td></tr>)}</tbody></InfoTable>
        </InfoBox>
      </SideColumn>
      <Pane>
        <Group aria-label="粗切">
          <RoughHead>
            <RoughToggle><Choice><Tick type="checkbox" defaultChecked />粗切</Choice></RoughToggle>
            <MethodName><Caption as="span" $w={66}>切削方式:</Caption><span>高速切削</span></MethodName>
          </RoughHead>
          <MethodList>
            {methods.map((m, i) => <Method key={m} $on={i === 5}><PatternIcon i={i} on={i === 5} /><span>{m}</span></Method>)}
          </MethodList>
          <Settings>
            <FieldStack>
              <label htmlFor="stepPct">切削間距(直徑%)</label><TextField id="stepPct" defaultValue="50.0" />
              <label htmlFor="stepDist">切削間距(距離)</label><TextField id="stepDist" defaultValue="5.0" />
              <label htmlFor="angle">粗切角度</label><TextField id="angle" defaultValue="0.0" disabled />
            </FieldStack>
            <CheckStack>
              <Choice $off><Tick type="checkbox" disabled />刀具路徑最佳化(避免插刀)</Choice>
              <Choice><Tick type="checkbox" />由內而外環切</Choice>
              <Choice><Tick type="checkbox" />顯示等距環切素材</Choice>
            </CheckStack>
            <Tolerance>
              殘料加工及等距環切公差
              <ToleranceRow>
                <TextField id="tolPct" defaultValue="6.25" /><label htmlFor="tolPct">%</label><TextField aria-label="公差" defaultValue="0.625" />
              </ToleranceRow>
            </Tolerance>
          </Settings>
        </Group>
        <Group $narrow>
          <Legend>擺線式切削:</Legend>
          <RadioRow>
            <Choice><Tick type="radio" name="troch" defaultChecked />關</Choice>
            <Choice><Tick type="radio" name="troch" />只在完整材料</Choice>
            <Choice><Tick type="radio" name="troch" />整個區域</Choice>
          </RadioRow>
          <LoopRow>
            <Caption $w={100} $off htmlFor="loopR">迴圈半徑</Caption><TextField id="loopR" defaultValue="5.0" disabled /><LoopDiagram />
          </LoopRow>
          <SpacingRow>
            <Caption $w={104} $off htmlFor="loopS">迴圈間距</Caption><TextField id="loopS" defaultValue="5.0" disabled />
          </SpacingRow>
          <CornerRow>
            <Caption $w={224} htmlFor="corner">轉角平滑的半徑</Caption><TextField id="corner" defaultValue="1.0" />
          </CornerRow>
        </Group>
      </Pane>
    </DialogBody>
    <DialogFoot>
      <LegendKey>
        <KeyRow><Check w={14} />=編輯</KeyRow>
        <KeyRow><No w={14} />=無效</KeyRow>
      </LegendKey>
      <Actions>
        <Action $main aria-label="確定"><S w={20}><path d="M1 11l4-3 3 4L18 0l1 1L9 19H7z" fill="#3db528" stroke="#1c7a10" strokeWidth=".8" /></S></Action>
        <Action aria-label="取消"><S w={20}><path d="M2 4l3-3 5 5 5-5 3 3-5 6 5 5-3 4-5-5-5 5-3-4 5-5z" fill="#f03a10" stroke="#b01808" strokeWidth=".8" /></S></Action>
        <Action aria-label="新增"><S w={24}><circle cx="12" cy="12" r="11.500" fill="#1070d8" stroke="#0a3a90" /><path d="M12 3v18M3 12h18" stroke="#fff" strokeWidth="4" /></S></Action>
        <Action $last aria-label="說明"><S w={18} h={22}><path d="M3 8c0-7 11-7 11-1 0 4-5 4-5 8" stroke="#334" strokeWidth="5" /><path d="M3 8c0-7 11-7 11-1 0 4-5 4-5 8" stroke="#a8a8c0" strokeWidth="3" /><circle cx="9" cy="19" r="2" fill="#b8b8cc" stroke="#334" /></S></Action>
      </Actions>
    </DialogFoot>
    <Ring width="1153" height="829" viewBox="216 1 1153 829" fill="none" stroke="#ed1c24" strokeWidth="5">
      <ellipse cx="1007.500" cy="203.500" rx="45.500" ry="52" />
      <ellipse cx="760" cy="645.500" rx="35.500" ry="26" />
      <path d="M1357 819h3m1 0h3m-7 5h3m1 0h3" stroke="#bbb" strokeWidth="3" />
    </Ring>
  </Dialog>
);

const Globe = () => <S w={20}><g stroke="#cfe0f5" strokeWidth="1.300"><circle cx="10" cy="10" r="8" /><ellipse cx="10" cy="10" rx="4" ry="8" /><path d="M2 10h16M3 6h14M3 14h14" /></g></S>;

export default function App() {
  return (
    <Shell>
      <Global />
      <TitleBar>
        <QuickBar>
          <IconButton aria-label="新增檔案"><NewFile /></IconButton>
          <IconButton aria-label="儲存檔案"><Disk /></IconButton>
          <IconButton aria-label="開啟"><OpenFile /></IconButton>
          <Down w={6} />
          <IconButton aria-label="列印"><Printer /></IconButton>
          <IconButton aria-label="另存新檔"><Disk pen /></IconButton>
          <IconButton aria-label="壓縮"><ZipFolder /></IconButton>
          <Divider />
        </QuickBar>
        <TitleText>
          <span>m\Parts\T.mcam* - Mastercam 銑床系統 2021</span>
          <WindowButtons>
            <IconButton aria-label="最小化"><S w={11}><path d="M1 8h8" stroke="#888" strokeWidth="1.500" /></S></IconButton>
            <IconButton aria-label="還原"><S w={11}><path d="M1 4h6v6H1zM4 4V1h6v6H7" stroke="#888" /></S></IconButton>
            <IconButton aria-label="關閉"><S w={11}><path d="M1 1l9 9M10 1l-9 9" stroke="#888" strokeWidth="1.500" /></S></IconButton>
          </WindowButtons>
        </TitleText>
      </TitleBar>
      <TabBar>
        <RibbonTabs><RibbonTab $file>檔案</RibbonTab><RibbonTab>首頁</RibbonTab><RibbonTab>線架構</RibbonTab></RibbonTabs>
        <Account>
          My Mastercam
          <S w={20}><circle cx="10" cy="10" r="9" fill="#3a78b8" stroke="#7aa6d2" /><path d="M7 8c0-4 6-4 6-1 0 2-3 2-3 5M10 14v2" stroke="#fff" strokeWidth="2" /></S>
          <S w={9} h={6}><path d="M1 5l3.500-4L8 5" stroke="#444" strokeWidth="1.500" /></S>
        </Account>
      </TabBar>
      <Ribbon>
        <MachineRow>
          {["銑床", "車床", "線切割", "木雕"].map((t, i) => <MachineButton key={t}><MachineIcon kind={i} />{t}<Down /></MachineButton>)}
        </MachineRow>
        <RibbonCaption>機器類型</RibbonCaption>
      </Ribbon>
      <Workspace>
        <Manager>
          <ManagerTitle>刀具路徑</ManagerTitle>
          <ToolRow>
            <IconButton aria-label="選取全部"><S w={21}><path d="M1 0v13l10-6z" fill="#5a9e83" /><Cursor x={12} y={7} /></S></IconButton>
            <IconButton aria-label="取消選取"><S w={21}><path d="M1 1l9 10M10 1L1 11" stroke="#d8492b" strokeWidth="2.500" /><Cursor x={12} y={7} /></S></IconButton>
            <Divider />
            <IconButton aria-label="重新計算"><S w={20}><ToolBit x={0} /><path d="M9 8v12l10-6z" fill="#5a9e83" /></S></IconButton>
            <IconButton aria-label="重新計算無效"><S w={20}><ToolBit x={0} /><path d="M9 9l9 10M18 9L9 19" stroke="#d8492b" strokeWidth="2.500" /></S></IconButton>
            <ToggleTool aria-label="模式"><S w={20}><path d="M0 0h8l-1 4H1z" fill="#888" /><path d="M2 4h4v7H2z" fill="#d6a01c" /><path d="M9 4l4-4v3h6v2h-6v3zM11 16l-4-4v3H2v2h5v3z" fill="#d8492b" /><path d="M12 9h8l-1 4h-6z" fill="#888" /><path d="M14 13h4v7h-4z" fill="#d6a01c" /></S><Down w={6} /></ToggleTool>
            <Divider />
            <IconButton aria-label="模擬"><Waves fill="#2c5a80" c="#fff" /></IconButton>
            <S w={12} h={16}><path d="M0 3l6-3 6 3v10l-6 3-6-3z" fill="#d6a860" /></S>
          </ToolRow>
          <ToolRow>
            <IconButton aria-label="鎖定"><S w={20}><path d="M6 9V5c0-5 9-5 9 0v4" stroke="#c39a55" strokeWidth="2.500" /><path d="M3 8h15v11H3z" fill="#c39a55" /><path d="M10.500 11v5" stroke="#6a4a1a" strokeWidth="2.500" /></S></IconButton>
            <IconButton aria-label="顯示路徑"><Waves c="#5f8fae" /></IconButton>
            <IconButton aria-label="隱藏"><S w={20}><path d="M3 19V8c0-10 14-10 14 0v11l-3-2-2 2-2-2-2 2-2-2z" fill="#999" /><path d="M6 6h3v4H6zM11 6h3v4h-3zM9 13h2v3H9z" fill="#333" /></S></IconButton>
            <Divider />
            <IconButton aria-label="下移"><S w={20}><path d="M3 5h14l-7 10z" fill="#d8492b" /></S></IconButton>
            <IconButton aria-label="上移"><S w={20}><path d="M3 15h14L10 5z" fill="#d8492b" /></S></IconButton>
            <IconButton aria-label="插入"><S w={20}><path d="M17 4H2v11h13M12 10l5 5-5 5" stroke="#d8492b" strokeWidth="2.500" /></S></IconButton>
            <IconButton aria-label="捲動"><S w={20}><path d="M10 0l6 7H4zM1 9h18v2H1zM4 13h12l-6 7z" fill="#d8492b" /></S></IconButton>
            <Divider />
          </ToolRow>
          <OpsTree>{opsTree.map((n, i) => <NodeRow key={i} n={n} />)}</OpsTree>
          <PaneTabs>
            <PaneTab $on>刀具路徑</PaneTab><PaneTab>實體</PaneTab><PaneTab>平面</PaneTab><PaneTab>層別</PaneTab><PaneTab>最近使用功能</PaneTab>
          </PaneTabs>
        </Manager>
        <ViewColumn>
          <Viewport>
            <Scene />
            <SelectBar>
              <S w={22}><path d="M10 10h10v11H10z" stroke="#8a5a28" /><path d="M12 15l3 3 4-6" stroke="#2f6a50" strokeWidth="1.500" /><path d="M1 2v9l3-2 2 4 1-1-1-4h3z" fill="#222" /></S>
              <S w={22}><circle cx="11" cy="11" r="7" stroke="#2f6a50" strokeWidth="1.500" strokeDasharray="8 4" /><path d="M1 8v9l3-2 2 4 1-1-1-4h3zM14 2v9l3-2 2 4 1-1-1-4h3z" fill="#222" /></S>
              <S w={22}><path d="M3 6c4-5 10-3 12 1M3 1v6h6" stroke="#2f6a50" strokeWidth="2" /><path d="M11 6v11l3-2 3 5 1-1-2-5h4z" fill="#222" /></S>
            </SelectBar>
            <MaskRail>
              {maskArt.map((a, i) => <MaskButton key={i} aria-label={`選取遮罩 ${i + 1}`}><S w={40} v="-8 -8 40 40"><path d="M-3 27L27 -3" stroke="#333" />{a}</S></MaskButton>)}
            </MaskRail>
            <ScaleBar><ScaleTop>11.233 mm</ScaleTop>公制</ScaleBar>
          </Viewport>
          <SheetTabs>
            <SheetInner>
              <SheetGroup><PaneTab $on>分頁 1</PaneTab><IconButton aria-label="新增分頁">+</IconButton></SheetGroup>
              <S w={28} h={12}><path d="M8 1v10L3 6zM21 1v10l5-5z" stroke="#666" /></S>
            </SheetInner>
          </SheetTabs>
        </ViewColumn>
      </Workspace>
      <StatusBar>
        <StatusItem $w={115}>剖面視圖: 關閉</StatusItem>
        <StatusItem $w={180}>選取的圖素: 0</StatusItem>
        <StatusItem $w={107}>X:<span>-117.08743</span></StatusItem>
        <StatusItem $w={21} />
        <StatusItem $w={90}>Y:<span>11.47900</span></StatusItem>
        <StatusItem $w={31} />
        <StatusItem $w={94}>Z:<span>0.00000</span><Down w={6} c="#8a8f98" /></StatusItem>
        <StatusItem $w={14} />
        <StatusItem $w={35}>3D</StatusItem>
        <StatusItem $w={127}>構圖平面: 俯視圖<Down w={6} c="#8a8f98" /></StatusItem>
        <StatusItem $w={10} />
        <StatusItem $w={127}>刀具平面: 俯視圖<Down w={6} c="#8a8f98" /></StatusItem>
        <StatusItem $w={9} />
        <StatusItem $w={101}>WCS: 俯視圖<Down w={6} c="#8a8f98" /></StatusItem>
        <StatusItem $w={11} />
        <ShadeButton aria-label="線架構"><Globe /></ShadeButton>
        <ShadeButton aria-label="隱藏線"><Globe /></ShadeButton>
        <ShadeButton aria-label="無隱藏線"><Globe /></ShadeButton>
        <ShadeButton $on aria-label="著色"><S w={20}><circle cx="10" cy="10" r="9" fill="#e4e4e4" /></S></ShadeButton>
        <ShadeButton aria-label="邊緣著色"><S w={20}><circle cx="10" cy="10" r="9" fill="#e4e4e4" /><path d="M3 16L16 3" stroke="#888" /></S></ShadeButton>
        <ShadeButton aria-label="半透明"><S w={20}><circle cx="10" cy="10" r="9" fill="#999" /><path d="M3 17A9 9 0 0 1 17 3z" fill="#eee" /></S></ShadeButton>
      </StatusBar>
      <Taskbar>
        <StartButton aria-label="開始"><S w={20}><path d="M0 3l9-1v7.500H0zM10 2l10-2v9.500H10zM0 10.500h9V18l-9-1zM10 10.500h10V20l-10-2z" fill="#fff" /></S></StartButton>
        <SearchBox>
          <S w={21}><circle cx="13" cy="8" r="6.500" stroke="#222" strokeWidth="1.800" /><path d="M8.500 12.500L1 20" stroke="#222" strokeWidth="1.800" /></S>
          <SearchInput aria-label="搜尋" placeholder="在這裡輸入文字來搜尋" />
        </SearchBox>
        <TaskButton aria-label="Cortana"><S w={20}><circle cx="10" cy="10" r="8.500" stroke="#fff" strokeWidth="2.500" /></S></TaskButton>
        <TaskButton aria-label="小算盤"><S w={24} h={30}><rect width="24" height="30" rx="2" fill="#6d7f92" /><path d="M3 3h18v5H3z" fill="#4cc4f0" /><path d="M4 11h4v4H4zM10 11h4v4h-4zM16 11h4v4h-4zM4 17h4v4H4zM10 17h4v4h-4zM4 23h4v4H4zM10 23h4v4h-4z" fill="#d8e0e8" /><path d="M16 17h4v10h-4z" fill="#1a4c8c" /></S></TaskButton>
        <TaskButton $run aria-label="小畫家"><S w={30} h={28}><path d="M2 14C2 6 10 3 17 4s10 6 9 12c-1 4-6 2-8 4s0 6-4 6C7 27 2 22 2 14z" fill="#b8d8ee" /><circle cx="8" cy="12" r="2.500" fill="#c33" /><circle cx="14" cy="8" r="2.500" fill="#3a3" /><circle cx="8" cy="19" r="2.500" fill="#e8b020" /><path d="M14 24L25 6l3 1-10 17z" fill="#c08040" /><path d="M24 7l3-7 3 2-2 7z" fill="#e8c890" /></S></TaskButton>
        <TaskButton aria-label="記事本"><S w={28}><path d="M10 2l16 3-6 21L2 22z" fill="#6fbccc" /><path d="M10 2l16 3-1 3L9 5z" fill="#dde" /><path d="M26 5l1 2-5 20-2-1z" fill="#e8eef0" /><path d="M2 22l5-12 12 14z" fill="#8accd8" /></S></TaskButton>
        <TaskButton $run aria-label="檔案總管"><S w={28} h={26}><path d="M0 2h10l2 3h16v19H0z" fill="#ffcf48" /><path d="M0 8h28v16H0z" fill="#ffdb70" /><path d="M5 24v-9h18v9h-5v-5h-8v5z" fill="#3a94dc" /></S></TaskButton>
        <TaskButton $run aria-label="Chrome"><S w={28}><circle cx="14" cy="14" r="13.500" fill="#fbc116" /><path d="M14 14L2.300 7.200A13.500 13.500 0 0 1 25.700 7.200H14z" fill="#e33b2e" /><path d="M2.300 7.200A13.500 13.500 0 0 0 13 27.500L20 17.500 8 17z" fill="#2da94f" /><circle cx="14" cy="14" r="6.500" fill="#fff" /><circle cx="14" cy="14" r="5" fill="#4285f4" /></S></TaskButton>
        <TaskButton $on aria-label="Mastercam 2021">
          <svg width="32" height="32" viewBox="0 0 32 32"><path d="M6 1h6l1 9 6-9h3l1 9 5-9h3l-8 20h-3l1-9-6 9h-3l-1-6-4 6H2z" fill="#d0103a" /><path d="M1 7h7V4l5 5-5 5v-3H1z" fill="#fff" /><text x="8" y="31" fontSize="10" fontWeight="700" fontFamily="Liberation Sans, sans-serif" fill="#111">2021</text></svg>
        </TaskButton>
        <Tray>
          <S w={16} h={9}><path d="M1 8l7-7 7 7" stroke="#fff" strokeWidth="1.500" /></S>
          <S w={20} h={18}><path d="M4 3h15v10H4zM8 17h7M11.500 13v4M1 1v12M0 4h4" stroke="#fff" strokeWidth="1.300" /></S>
          <S w={18}><path d="M1 6h3l4-4v14l-4-4H1zM10 6q2 3 0 6M13 4q4 5 0 10M16 2q5 7 0 14" stroke="#fff" strokeWidth="1.300" /></S>
          <Ime>英</Ime>
          <Clock>下午 01:44<br />2021/5/9</Clock>
          <S w={20}><path d="M1 2h18v14h-7l-3 3v-3H1z" stroke="#fff" strokeWidth="1.500" /></S>
        </Tray>
      </Taskbar>
      <Watermark>
        <S w={72} h={82}>
          <path d="M36 1l30 20-30-4L10 30 6 20z" fill="#8fd4f5" opacity=".55" />
          <path d="M36 1L71 20v40L36 81 1 60V20zM36 17L16 29v25l20 12 20-12V29z" fill="#1c9ad6" opacity=".7" fillRule="evenodd" />
          <path d="M36 1L1 20v14l35-17 20-6z" fill="#c4ecff" opacity=".6" />
          <path d="M20 30l14 10v22L20 54z" fill="#3cb0e8" opacity=".6" /><path d="M52 30L38 40v22l14-8z" fill="#0a78b8" opacity=".6" />
        </S>
        <div><MarkName>3D世界网</MarkName><MarkUrl>WWW.3DSJW.COM</MarkUrl></div>
      </Watermark>
      <PocketDialog />
    </Shell>
  );
}
